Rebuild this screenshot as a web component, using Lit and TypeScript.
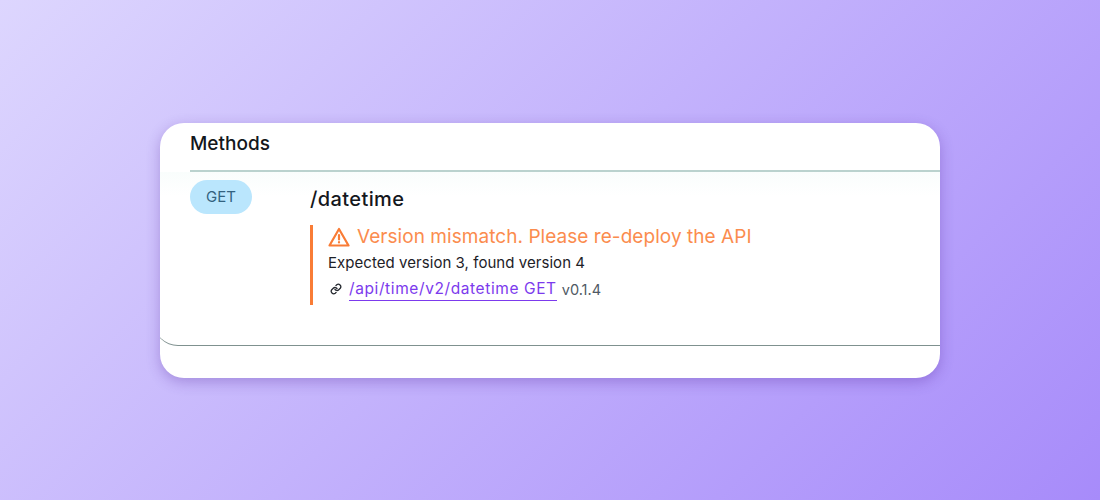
import { LitElement, html, css } from 'lit';
import { customElement } from 'lit/decorators.js';

@customElement('app-root')
export class AppRoot extends LitElement {
  static styles = css`
    :host {
      display: flex;
      align-items: flex-start;
      justify-content: center;
      width: 1100px;
      height: 500px;
      box-sizing: border-box;
      padding-top: 123px;
      background: linear-gradient(135deg, #ddd6fe 0%, #a78bfa 100%);
      font-family: 'Inter', 'Lato', sans-serif;
    }

    .card {
      width: 780px;
      height: 255px;
      background: #fff;
      border-radius: 24px;
      overflow: hidden;
      box-shadow: 0 4px 14px rgba(76, 29, 149, 0.3);
    }

    /* starts left of the card, so the clip cuts into its rounded corner */
    .panel {
      height: 223px;
      box-sizing: border-box;
      margin-left: -6px;
      border-bottom: 1px solid #7f918f;
      border-bottom-left-radius: 24px;
    }

    .title {
      height: 49px;
      box-sizing: border-box;
      margin-left: 36px;
      padding-top: 9px;
      border-bottom: 2px solid #bad2ce;
      font-size: 19px;
      line-height: 24px;
      font-weight: 500;
      color: #14171c;
    }

    .row {
      display: flex;
      padding: 8px 0 0 36px;
      background: linear-gradient(#f9fdfc, #fff 24px);
    }

    .pill {
      width: 62px;
      height: 34px;
      margin-right: 58px;
      border-radius: 17px;
      background: #bae6fd;
      color: #33627f;
      font-size: 15px;
      line-height: 34px;
      text-align: center;
    }

    .path {
      margin-top: 6px;
      font-size: 20px;
      line-height: 26px;
      font-weight: 500;
      letter-spacing: 0.4px;
      color: #14171c;
    }

    .alert {
      display: flex;
      flex-direction: column;
      margin-top: 13px;
      height: 80px;
      width: 460px;
      box-sizing: border-box;
      border-left: 3px solid #f97c36;
      padding-left: 15px;
    }

    .alert-head {
      display: flex;
      align-items: center;
      gap: 7px;
      height: 23px;
      color: #fb8c4e;
      font-size: 19px;
      line-height: 23px;
      letter-spacing: 0.05px;
      white-space: nowrap;
    }

    .detail {
      margin-top: 3px;
      font-size: 15px;
      line-height: 24px;
      letter-spacing: 0.05px;
      color: #1d2127;
    }

    .source {
      display: flex;
      align-items: center;
      margin-top: 3px;
      font-size: 14.5px;
      line-height: 22px;
      color: #4f5a64;
    }

    .source svg {
      margin: -2px 7px 0 2px;
    }

    .link {
      color: #7c3aed;
      border-bottom: 1px solid #7c3aed;
      font-size: 15.5px;
      letter-spacing: 0.6px;
      margin-right: 5px;
    }
  `;

  render() {
    return html`
      <div class="card">
        <div class="panel">
          <div class="title">Methods</div>
          <div class="row">
            <div class="pill">GET</div>
            <div>
              <div class="path">/datetime</div>
              <div class="alert">
                <div class="alert-head">
                  <svg width="22" height="20" viewBox="0 0 22 20" fill="none" stroke="#f97c36" stroke-width="2.2" stroke-linejoin="round" stroke-linecap="round">
                    <path d="M11 2 L20.5 18.5 H1.5 Z"></path>
                    <path d="M11 8 V12.5"></path>
                    <path d="M11 15.2 V15.4"></path>
                  </svg>
                  <span>Version mismatch. Please re-deploy the API</span>
                </div>
                <div class="detail">Expected version 3, found version 4</div>
                <div class="source">
                  <svg width="12" height="12" viewBox="0 0 24 24" fill="none" stroke="#23272e" stroke-width="2.6" stroke-linecap="round" stroke-linejoin="round">
                    <path d="M10 13a5 5 0 0 0 7.5.5l3-3a5 5 0 0 0-7-7l-1.7 1.7"></path>
                    <path d="M14 11a5 5 0 0 0-7.5-.5l-3 3a5 5 0 0 0 7 7l1.7-1.7"></path>
                  </svg>
                  <span class="link">/api/time/v2/datetime GET</span>
                  <span>v0.1.4</span>
                </div>
              </div>
            </div>
          </div>
        </div>
      </div>
    `;
  }
}
